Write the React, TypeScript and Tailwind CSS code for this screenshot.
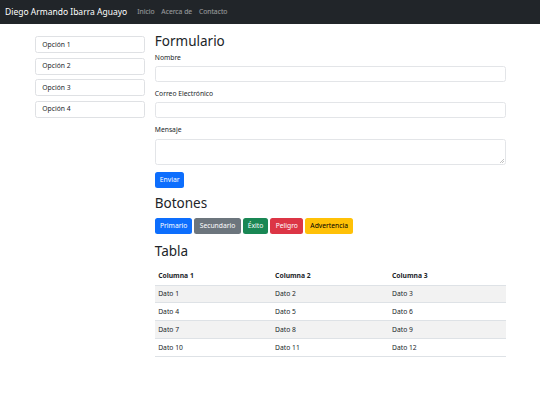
export default function App() {
  const options = ["Opción 1", "Opción 2", "Opción 3", "Opción 4"];
  const rows = [
    ["Dato 1", "Dato 2", "Dato 3"],
    ["Dato 4", "Dato 5", "Dato 6"],
    ["Dato 7", "Dato 8", "Dato 9"],
    ["Dato 10", "Dato 11", "Dato 12"],
  ];
  const buttons = [
    { label: "Primario", cls: "bg-[#0d6efd] text-white" },
    { label: "Secundario", cls: "bg-[#6c757d] text-white" },
    { label: "Éxito", cls: "bg-[#198754] text-white" },
    { label: "Peligro", cls: "bg-[#dc3545] text-white" },
    { label: "Advertencia", cls: "bg-[#ffc107] text-black" },
  ];

  return (
    <div className="min-h-screen bg-white font-['Noto_Sans',sans-serif] text-[#212529] text-[6.75px] leading-[10.1px]">
      {/* navbar */}
      <nav className="flex h-[23.6px] items-center bg-[#212529] px-[5px]">
        <span className="mr-[6.75px] text-[8.5px] leading-[12.6px] text-white">
          Diego Armando Ibarra Aguayo
        </span>
        <a className="px-[3.4px] text-white/55">Inicio</a>
        <a className="px-[3.4px] text-white/55">Acerca de</a>
        <a className="px-[3.4px] text-white/55">Contacto</a>
      </nav>

      <div className="mx-auto flex w-[481px] gap-[10.1px] px-[5px] pt-[9.4px]">
        {/* sidebar */}
        <aside className="mt-[3.4px] flex w-[110.2px] shrink-0 flex-col gap-[4.3px]">
          {options.map((o) => (
            <div
              key={o}
              className="rounded-[2.5px] border border-[#dfe1e4] px-[6.75px] py-[2.5px]"
            >
              {o}
            </div>
          ))}
        </aside>

        {/* main */}
        <main className="min-w-0 flex-1">
          <h2 className="mb-[3.4px] text-[13.5px] leading-[16.2px] font-normal">Formulario</h2>

          <div className="mb-[6.75px]">
            <label className="mb-[3.4px] block">Nombre</label>
            <div className="h-[16px] rounded-[2.5px] border border-[#e3e5e8]" />
          </div>
          <div className="mb-[6.75px]">
            <label className="mb-[3.4px] block">Correo Electrónico</label>
            <div className="h-[16px] rounded-[2.5px] border border-[#e3e5e8]" />
          </div>
          <div className="mb-[6.75px]">
            <label className="mb-[3.4px] block">Mensaje</label>
            <div className="relative h-[26.5px] rounded-[2.5px] border border-[#e3e5e8]">
              <svg
                className="absolute bottom-[1px] right-[1px]"
                width="4"
                height="4"
                viewBox="0 0 4 4"
              >
                <path d="M4 0L0 4M4 2L2 4" stroke="#9a9a9a" strokeWidth="0.6" />
              </svg>
            </div>
          </div>
          <button className="h-[16px] rounded-[2.5px] bg-[#0d6efd] px-[5px] text-white">
            Enviar
          </button>

          <h2 className="mt-[7.5px] mb-[7px] text-[13.5px] leading-[16.2px] font-normal">Botones</h2>
          <div className="flex gap-[2px]">
            {buttons.map((b) => (
              <button
                key={b.label}
                className={`h-[16px] rounded-[2.5px] px-[5.2px] ${b.cls}`}
              >
                {b.label}
              </button>
            ))}
          </div>

          <h2 className="mt-[9px] mb-[8px] text-[13.5px] leading-[16.2px] font-normal">Tabla</h2>
          <table className="w-full table-fixed border-collapse text-left">
            <thead>
              <tr className="border-b border-[#dee2e6]">
                {["Columna 1", "Columna 2", "Columna 3"].map((h) => (
                  <th key={h} className="px-[3.4px] py-[3.4px] font-bold">
                    {h}
                  </th>
                ))}
              </tr>
            </thead>
            <tbody>
              {rows.map((r, i) => (
                <tr
                  key={i}
                  className={`border-b border-[#dee2e6] ${i % 2 === 0 ? "bg-[#f2f2f2]" : ""}`}
                >
                  {r.map((c) => (
                    <td key={c} className="px-[3.4px] py-[3.4px]">
                      {c}
                    </td>
                  ))}
                </tr>
              ))}
            </tbody>
          </table>
        </main>
      </div>
    </div>
  );
}
